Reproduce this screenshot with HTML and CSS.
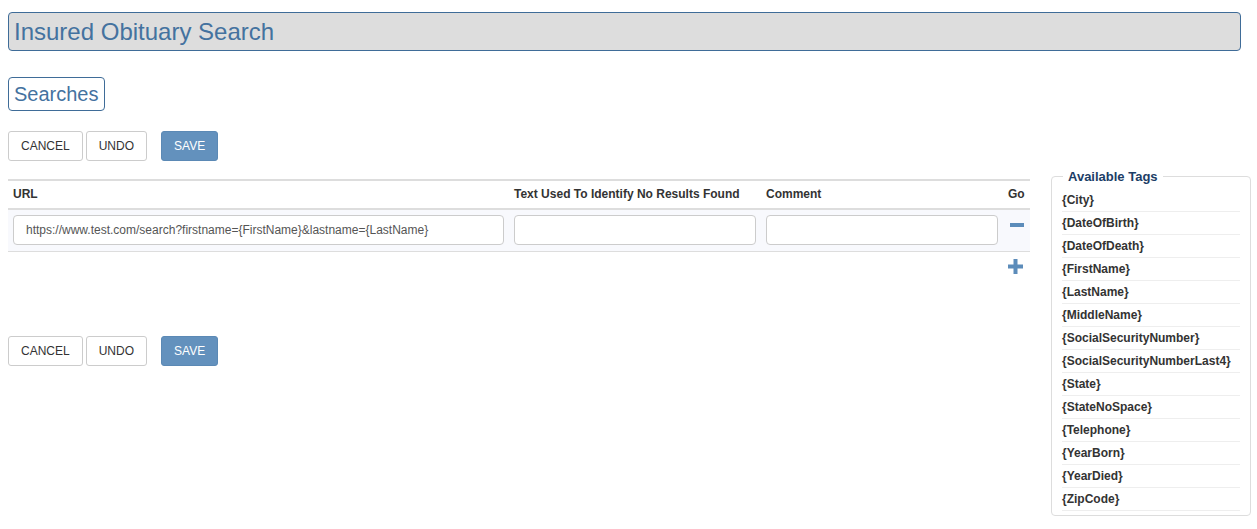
FILE: index.html
```html
<!DOCTYPE html>
<html lang="en">

<head>
    <meta charset="UTF-8">
    <meta name="viewport" content="width=device-width, initial-scale=1.0">
    <title>Insured Obituary Search</title>
    <link rel="stylesheet" href="styles.css">
</head>

<body>
    <h1 class="page-title">Insured Obituary Search</h1>

    <h2 class="section-title">Searches</h2>

    <div class="layout">
        <div class="layout__main">
            <div class="actions">
                <button class="btn">CANCEL</button>
                <button class="btn">UNDO</button>
                <button class="btn btn--primary">SAVE</button>
            </div>

            <table class="searches">
                <colgroup>
                    <col class="col-url">
                    <col class="col-text">
                    <col class="col-comment">
                    <col class="col-go">
                </colgroup>
                <thead>
                    <tr>
                        <th>URL</th>
                        <th>Text Used To Identify No Results Found</th>
                        <th>Comment</th>
                        <th>Go</th>
                    </tr>
                </thead>
                <tbody>
                    <tr class="searches__row">
                        <td><input type="text" class="field" value="https://www.test.com/search?firstname={FirstName}&amp;lastname={LastName}"></td>
                        <td><input type="text" class="field"></td>
                        <td><input type="text" class="field"></td>
                        <td class="searches__go">
                            <i class="icon icon--remove">
                                <svg xmlns="http://www.w3.org/2000/svg" width="14" height="4" viewBox="0 0 14 4">
                                    <rect x="0" y="0" width="14" height="4" fill="currentColor" />
                                </svg>
                            </i>
                        </td>
                    </tr>
                    <tr class="searches__add">
                        <td colspan="3"></td>
                        <td class="searches__go">
                            <i class="icon icon--add">
                                <svg xmlns="http://www.w3.org/2000/svg" width="15" height="15" viewBox="0 0 15 15">
                                    <path d="M5.5 0h4v5.5H15v4H9.5V15h-4V9.5H0v-4h5.5z" fill="currentColor" />
                                </svg>
                            </i>
                        </td>
                    </tr>
                </tbody>
            </table>

            <div class="actions actions--bottom">
                <button class="btn">CANCEL</button>
                <button class="btn">UNDO</button>
                <button class="btn btn--primary">SAVE</button>
            </div>
        </div>

        <fieldset class="tags">
            <legend class="tags__title">Available Tags</legend>
            <ul class="tags__list">
                <li>{City}</li>
                <li>{DateOfBirth}</li>
                <li>{DateOfDeath}</li>
                <li>{FirstName}</li>
                <li>{LastName}</li>
                <li>{MiddleName}</li>
                <li>{SocialSecurityNumber}</li>
                <li>{SocialSecurityNumberLast4}</li>
                <li>{State}</li>
                <li>{StateNoSpace}</li>
                <li>{Telephone}</li>
                <li>{YearBorn}</li>
                <li>{YearDied}</li>
                <li>{ZipCode}</li>
            </ul>
        </fieldset>
    </div>
</body>

</html>
```

FILE: styles.css
```css
body {
    margin: 8px 0 8px 8px;
    font-family: "Liberation Sans", Arial, sans-serif;
    font-size: 12px;
    color: #333;
    background-color: #fff;
}

.page-title {
    margin: 4px 16px 0 0;
    padding: 0 5px;
    height: 37px;
    line-height: 37px;
    font-size: 24px;
    font-weight: normal;
    color: #44729f;
    background-color: #ddd;
    border: 1px solid #3f6c98;
    border-radius: 4px;
}

.section-title {
    display: inline-block;
    margin: 26px 0 0;
    padding: 0 5px;
    height: 32px;
    line-height: 32px;
    font-size: 20px;
    font-weight: normal;
    color: #44729f;
    border: 1px solid #3f6c98;
    border-radius: 4px;
}

.layout {
    display: flex;
    align-items: flex-start;
}

.layout__main {
    flex-shrink: 0;
    width: 1022px;
}

.actions {
    display: flex;
    gap: 3px;
    margin-top: 20px;
}

.actions--bottom {
    margin-top: 57px;
}

.btn {
    height: 30px;
    padding: 0 12px;
    font-family: inherit;
    font-size: 12px;
    color: #333;
    background-color: #fff;
    border: 1px solid #ccc;
    border-radius: 3px;
    cursor: pointer;
}

.btn--primary {
    margin-left: 11px;
    color: #fff;
    background-color: #6391bd;
    border-color: #5b89b5;
}

.searches {
    width: 100%;
    margin-top: 18px;
    table-layout: fixed;
    border-collapse: collapse;
    border-top: 2px solid #ddd;
}

.col-url {
    width: 501px;
}

.col-text {
    width: 252px;
}

.col-comment {
    width: 242px;
}

.col-go {
    width: 27px;
}

.searches th {
    padding: 4px 5px 6px;
    height: 17px;
    text-align: left;
    font-weight: bold;
    border-bottom: 2px solid #ddd;
}

.searches td {
    padding: 5px 5px 6px;
    vertical-align: middle;
}

.searches__row td {
    background-color: #f8f9fd;
    border-bottom: 1px solid #ddd;
}

.searches__add td {
    height: 18px;
    padding: 5px 5px 4px;
}

.field {
    box-sizing: border-box;
    width: 100%;
    height: 30px;
    padding: 0 12px;
    font-family: inherit;
    font-size: 12px;
    color: #555;
    background-color: #fff;
    border: 1px solid #ccc;
    border-radius: 4px;
    outline: none;
}

.searches__go {
    padding-left: 5px;
}

.icon {
    display: flex;
    color: #5c8cba;
    cursor: pointer;
}

.icon--remove {
    padding-left: 2px;
    margin-bottom: 10px;
}

.tags {
    flex-shrink: 0;
    box-sizing: border-box;
    width: 200px;
    margin: 58px 0 0 21px;
    padding: 5px 10px 4px;
    border: 1px solid #ddd;
    border-radius: 4px;
}

.tags__title {
    margin-left: 1px;
    padding: 0 5px;
    font-size: 13px;
    font-weight: bold;
    color: #1c3d66;
}

.tags__list {
    margin: 0;
    padding: 0;
    list-style: none;
}

.tags__list li {
    height: 22px;
    line-height: 22px;
    font-weight: bold;
    border-bottom: 1px solid #eee;
}
```
